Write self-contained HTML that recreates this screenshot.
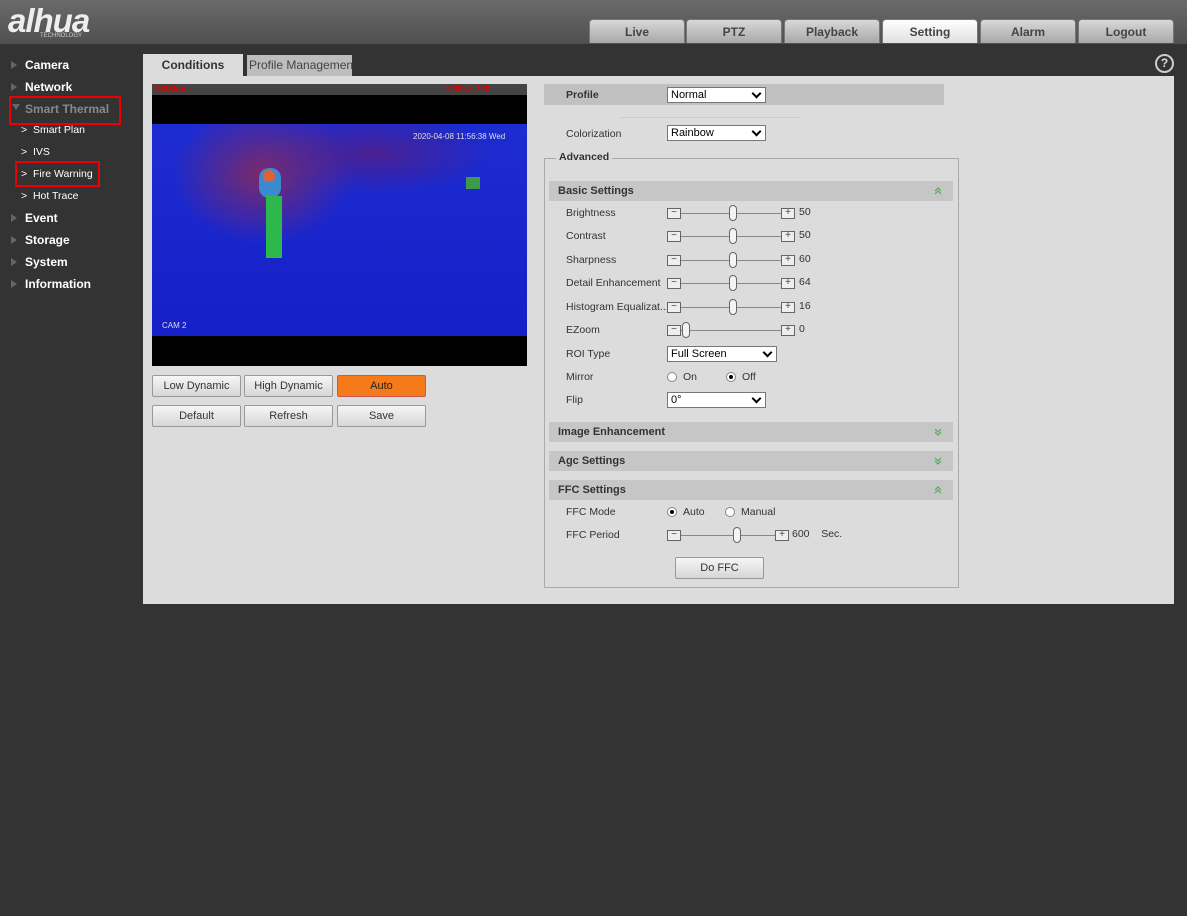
<!DOCTYPE html>
<html><head><meta charset="utf-8"><style>
*{margin:0;padding:0;box-sizing:border-box}
body{width:1187px;height:916px;background:#333;font-family:"Liberation Sans",Arial,sans-serif;position:relative;overflow:hidden;font-size:11px;color:#333}
.a{position:absolute}
#hdr{left:0;top:0;width:1187px;height:44px;background:linear-gradient(#6a6a6a,#505050)}
.tab{position:absolute;top:19px;width:96px;height:24px;background:linear-gradient(#d8d8d8,#a8a8a8);border:1px solid #777;border-bottom:none;border-radius:4px 4px 0 0;text-align:center;line-height:24px;font-weight:bold;font-size:12px;color:#444}
.tab.on{background:linear-gradient(#fff,#e0e0e0)}
.nav{position:absolute;left:25px;color:#fff;font-weight:bold;font-size:12px}
.tri{position:absolute;left:11px;width:0;height:0;border-left:6px solid #666;border-top:4px solid transparent;border-bottom:4px solid transparent}
.sub{position:absolute;left:21px;color:#fff;font-size:10.5px}
.redbox{position:absolute;border:2px solid #e00}
#panel{left:143px;top:76px;width:1031px;height:528px;background:#dcdcdc}
.btn{position:absolute;height:22px;border:1px solid #999;border-radius:2px;background:linear-gradient(#f6f6f6,#d6d6d6);text-align:center;line-height:20px;font-size:11px;color:#333}
.lbl{position:absolute;left:566px;font-size:10.5px;color:#333}
.sel{position:absolute;left:667px;height:16px;background:#fff;border:1px solid #777;font-size:11px;line-height:14px;padding-left:3px;color:#000}
.sel:after{content:"";position:absolute;right:5px;top:2px;width:5px;height:5px;border-right:2px solid #000;border-bottom:2px solid #000;transform:rotate(45deg)}
.bar{position:absolute;left:549px;width:404px;height:20px;background:#c6c6c6;font-weight:bold;font-size:11px;line-height:20px;padding-left:9px;color:#333}
.bar svg{position:absolute;right:10px;top:5px}
.sl{position:absolute;left:667px;width:140px;height:16px}
.sl .m,.sl .p{position:absolute;top:3px;width:14px;height:11px;border:1px solid #666;background:#eee;font-size:10px;line-height:8px;text-align:center;color:#444}
.sl .m{left:0}.sl .p{left:114px}
.sl .t{position:absolute;left:14px;top:8px;width:100px;height:1px;background:#888}
.sl .h{position:absolute;top:0;width:8px;height:16px;border:1px solid #666;border-radius:4px;background:#f4f4f4}
.sl .v{position:absolute;left:132px;top:1px;font-size:10.5px}
.rad{position:absolute;width:10px;height:10px;border:1px solid #888;border-radius:50%;background:#fff}
.rad.on:after{content:"";position:absolute;left:2px;top:2px;width:4px;height:4px;border-radius:50%;background:#000}
</style></head><body>
<div class="a" id="hdr"></div>
<div class="a" style="left:8px;top:2px;font-size:33px;font-weight:bold;font-style:italic;color:#eee;letter-spacing:-1px">alhua</div>
<div class="a" style="left:40px;top:33px;font-size:6px;color:#ccc">TECHNOLOGY</div>
<div class="tab" style="left:589px">Live</div>
<div class="tab" style="left:686px">PTZ</div>
<div class="tab" style="left:784px">Playback</div>
<div class="tab on" style="left:882px">Setting</div>
<div class="tab" style="left:980px">Alarm</div>
<div class="tab" style="left:1078px">Logout</div>
<div class="a" style="left:1155px;top:54px;width:19px;height:19px;border:2px solid #ccc;border-radius:50%;color:#ddd;text-align:center;font-weight:bold;font-size:12px;line-height:15px">?</div>

<div class="tri" style="top:61px"></div><div class="nav" style="top:58px">Camera</div>
<div class="tri" style="top:83px"></div><div class="nav" style="top:80px">Network</div>
<div class="a" style="left:12px;top:104px;border-top:6px solid #666;border-left:4px solid transparent;border-right:4px solid transparent"></div><div class="nav" style="top:102px;color:#888">Smart Thermal</div>
<div class="redbox" style="left:9px;top:96px;width:112px;height:29px"></div>
<div class="sub" style="top:124px">&gt;&nbsp; Smart Plan</div>
<div class="sub" style="top:146px">&gt;&nbsp; IVS</div>
<div class="sub" style="top:168px">&gt;&nbsp; Fire Warning</div>
<div class="redbox" style="left:15px;top:161px;width:85px;height:26px"></div>
<div class="sub" style="top:190px">&gt;&nbsp; Hot Trace</div>
<div class="tri" style="top:214px"></div><div class="nav" style="top:211px">Event</div>
<div class="tri" style="top:236px"></div><div class="nav" style="top:233px">Storage</div>
<div class="tri" style="top:258px"></div><div class="nav" style="top:255px">System</div>
<div class="tri" style="top:280px"></div><div class="nav" style="top:277px">Information</div>

<div class="a" style="left:143px;top:54px;width:100px;height:24px;background:#dcdcdc;text-align:center;line-height:22px;font-weight:bold;font-size:12px">Conditions</div>
<div class="a" style="left:247px;top:55px;width:105px;height:21px;background:#bdbdbd;line-height:21px;font-size:12px;color:#444;padding-left:2px;white-space:nowrap;overflow:hidden">Profile Management</div>
<div class="a" id="panel"></div>

<div class="a" style="left:152px;top:84px;width:375px;height:282px;background:#000"></div>
<div class="a" style="left:152px;top:84px;width:375px;height:11px;background:#444"></div>
<div class="a" style="left:153px;top:84px;color:#d00;font-size:9px;font-weight:bold">1538kbs</div>
<div class="a" style="left:445px;top:84px;color:#d00;font-size:9px;font-weight:bold">1280 × 720</div>
<div class="a" style="left:152px;top:124px;width:375px;height:212px;background:radial-gradient(ellipse 90px 70px at 110px 50px,#7a2a6a,transparent),radial-gradient(ellipse 120px 40px at 220px 30px,#4a2090,transparent),linear-gradient(#1d2cd0,#1520c8)"></div>
<div class="a" style="left:259px;top:168px;width:22px;height:30px;border-radius:10px;background:#3a8ad0"></div>
<div class="a" style="left:263px;top:170px;width:12px;height:12px;border-radius:50%;background:#e0603a"></div>
<div class="a" style="left:266px;top:196px;width:16px;height:62px;background:#2cb84a"></div>
<div class="a" style="left:466px;top:177px;width:14px;height:12px;background:#3c9a4a"></div>
<div class="a" style="left:413px;top:132px;color:#ddd;font-size:8px">2020-04-08 11:56:38 Wed</div>
<div class="a" style="left:162px;top:321px;color:#ddd;font-size:8px">CAM 2</div>

<div class="btn" style="left:152px;top:375px;width:89px">Low Dynamic</div>
<div class="btn" style="left:244px;top:375px;width:89px">High Dynamic</div>
<div class="btn" style="left:337px;top:375px;width:89px;background:#f57a1a;border-color:#c55;color:#222">Auto</div>
<div class="btn" style="left:152px;top:405px;width:89px">Default</div>
<div class="btn" style="left:244px;top:405px;width:89px">Refresh</div>
<div class="btn" style="left:337px;top:405px;width:89px">Save</div>

<div class="a" style="left:544px;top:84px;width:400px;height:21px;background:#c0c0c0"></div>
<div class="a" style="left:566px;top:89px;font-weight:bold;font-size:10.5px">Profile</div>
<div class="sel" style="top:87px;width:99px">Normal</div>
<div class="a" style="left:620px;top:117px;width:180px;height:1px;background:#ccc"></div>
<div class="lbl" style="top:128px">Colorization</div>
<div class="sel" style="top:125px;width:99px">Rainbow</div>
<div class="a" style="left:544px;top:158px;width:415px;height:430px;border:1px solid #aaa"></div>
<div class="a" style="left:556px;top:151px;background:#dcdcdc;padding:0 3px;font-weight:bold;font-size:10.5px">Advanced</div>

<div class="bar" style="top:181px">Basic Settings<svg width="10" height="10" viewBox="0 0 10 10"><path d="M2 5L5 2L8 5M2 8L5 5L8 8" fill="none" stroke="#5a5" stroke-width="1.2"/></svg></div>
<div class="lbl" style="top:207px">Brightness</div><div class="sl" style="top:205px"><div class="m">−</div><div class="t"></div><div class="h" style="left:62px"></div><div class="p">+</div><div class="v">50</div></div>
<div class="lbl" style="top:230px">Contrast</div><div class="sl" style="top:228px"><div class="m">−</div><div class="t"></div><div class="h" style="left:62px"></div><div class="p">+</div><div class="v">50</div></div>
<div class="lbl" style="top:254px">Sharpness</div><div class="sl" style="top:252px"><div class="m">−</div><div class="t"></div><div class="h" style="left:62px"></div><div class="p">+</div><div class="v">60</div></div>
<div class="lbl" style="top:277px">Detail Enhancement</div><div class="sl" style="top:275px"><div class="m">−</div><div class="t"></div><div class="h" style="left:62px"></div><div class="p">+</div><div class="v">64</div></div>
<div class="lbl" style="top:301px">Histogram Equalizat...</div><div class="sl" style="top:299px"><div class="m">−</div><div class="t"></div><div class="h" style="left:62px"></div><div class="p">+</div><div class="v">16</div></div>
<div class="lbl" style="top:324px">EZoom</div><div class="sl" style="top:322px"><div class="m">−</div><div class="t"></div><div class="h" style="left:15px"></div><div class="p">+</div><div class="v">0</div></div>
<div class="lbl" style="top:348px">ROI Type</div><div class="sel" style="top:346px;width:110px">Full Screen</div>
<div class="lbl" style="top:371px">Mirror</div>
<div class="rad" style="left:667px;top:372px"></div><div class="a" style="left:683px;top:371px;font-size:10.5px">On</div>
<div class="rad on" style="left:726px;top:372px"></div><div class="a" style="left:742px;top:371px;font-size:10.5px">Off</div>
<div class="lbl" style="top:394px">Flip</div><div class="sel" style="top:392px;width:99px">0°</div>

<div class="bar" style="top:422px">Image Enhancement<svg width="10" height="10" viewBox="0 0 10 10"><path d="M2 2L5 5L8 2M2 5L5 8L8 5" fill="none" stroke="#5a5" stroke-width="1.2"/></svg></div>
<div class="bar" style="top:451px">Agc Settings<svg width="10" height="10" viewBox="0 0 10 10"><path d="M2 2L5 5L8 2M2 5L5 8L8 5" fill="none" stroke="#5a5" stroke-width="1.2"/></svg></div>
<div class="bar" style="top:480px">FFC Settings<svg width="10" height="10" viewBox="0 0 10 10"><path d="M2 5L5 2L8 5M2 8L5 5L8 8" fill="none" stroke="#5a5" stroke-width="1.2"/></svg></div>
<div class="lbl" style="top:506px">FFC Mode</div>
<div class="rad on" style="left:667px;top:507px"></div><div class="a" style="left:683px;top:506px;font-size:10.5px">Auto</div>
<div class="rad" style="left:725px;top:507px"></div><div class="a" style="left:741px;top:506px;font-size:10.5px">Manual</div>
<div class="lbl" style="top:529px">FFC Period</div>
<div class="sl" style="top:527px;width:190px"><div class="m">−</div><div class="t" style="width:94px"></div><div class="h" style="left:66px"></div><div class="p" style="left:108px">+</div><div class="v" style="left:125px">600 &nbsp;&nbsp; Sec.</div></div>
<div class="btn" style="left:675px;top:557px;width:89px">Do FFC</div>
</body></html>
